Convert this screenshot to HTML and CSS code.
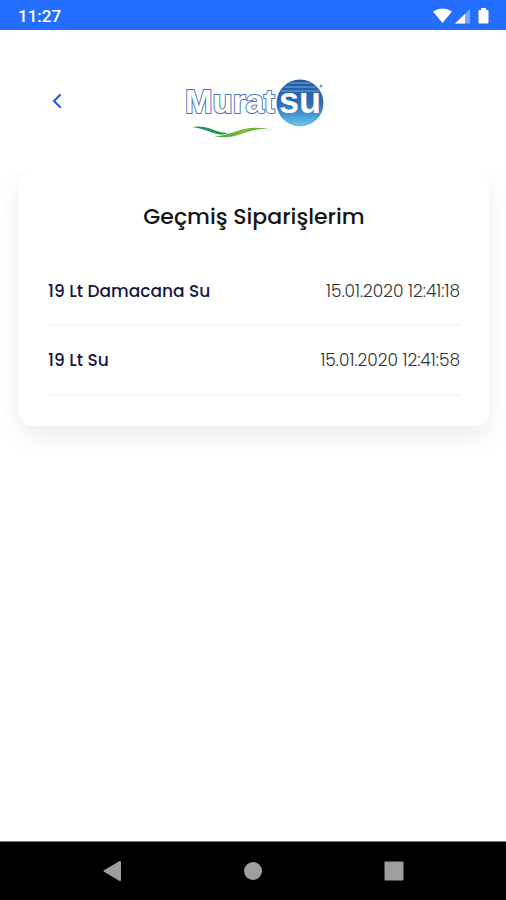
FILE: index.html
```html
<!DOCTYPE html>
<html lang="tr">
<head>
<meta charset="utf-8">
<meta name="viewport" content="width=device-width, initial-scale=1">
<title>Geçmiş Siparişlerim</title>
<link rel="stylesheet" href="styles.css">
</head>
<body>
<div class="status">
  <time>11:27</time>
  <svg class="status-icons" width="58" height="18" viewBox="0 0 58 18" aria-hidden="true">
    <path d="M1 4.500Q10.500-1.500 20 4.500L10.500 16Z" fill="#fff"/>
    <path d="M23 16.500 38 2V16.500Z" fill="#7ba8ff"/>
    <path d="M23 16.500 33 7V16.500Z" fill="#fff"/>
    <path d="M49 1h5v2h1.500q1 0 1 1v11.500q0 1-1 1h-8q-1 0-1-1V4q0-1 1-1H49Z" fill="#fff"/>
  </svg>
</div>
<header class="header">
  <button class="back" type="button" aria-label="Geri">
    <svg width="12" height="16" viewBox="0 0 12 16"><path d="M10 2 4 8l6 6" fill="none" stroke="#2660d8" stroke-width="2.200" stroke-linecap="round" stroke-linejoin="round"/></svg>
  </button>
  <svg class="logo" width="142" height="62" viewBox="0 0 142 62" role="img" aria-label="Muratsu">
    <defs>
      <linearGradient id="ball" x1="0" y1="0" x2="0" y2="1">
        <stop offset="0" stop-color="#2558a3"/><stop offset=".5" stop-color="#2c6db4"/><stop offset=".75" stop-color="#4198d3"/><stop offset="1" stop-color="#7cc4ec"/>
      </linearGradient>
      <linearGradient id="wave" x1="0" y1="0" x2="1" y2="0">
        <stop offset="0" stop-color="#35a34a"/><stop offset=".5" stop-color="#83bd3b"/><stop offset="1" stop-color="#479d40"/>
      </linearGradient>
    </defs>
    <text class="logo-murat" x="3" y="36">Murat</text>
    <circle cx="118" cy="26" r="23.500" fill="url(#ball)"/>
    <path d="M107 6h22M102 10h32M99 14h38" stroke="#6faedb" stroke-width="1"/>
    <text class="logo-su" x="97" y="36">su</text>
    <circle cx="139" cy="9" r="1" fill="none" stroke="#4b76b8"/>
    <path d="M10 50C26 47 33 56 46 56C36 61 26 52 10 50Z" fill="#229454"/>
    <path d="M32 59C50 60 60 45 91 53C66 48 56 65 32 59Z" fill="url(#wave)"/>
  </svg>
</header>
<main class="card">
  <h1>Geçmiş Siparişlerim</h1>
  <table class="orders">
    <tbody>
      <tr><th scope="row">19 Lt Damacana Su</th><td>15.01.2020 12:41:18</td></tr>
      <tr><th scope="row">19 Lt Su</th><td>15.01.2020 12:41:58</td></tr>
    </tbody>
  </table>
</main>
<nav class="nav" aria-label="Sistem">
  <button type="button" aria-label="Geri"><svg width="22" height="22" viewBox="0 0 22 22"><path d="M3 10.200 18.500 1Q20 .5 20 2V20q0 1.500-1.500 1L3 11.800Q1.500 11 3 10.200Z"/></svg></button>
  <button type="button" aria-label="Ana ekran"><svg width="22" height="22" viewBox="0 0 22 22"><circle cx="11" cy="11" r="9"/></svg></button>
  <button type="button" aria-label="Son uygulamalar"><svg width="22" height="22" viewBox="0 0 22 22"><rect x="1.500" y="1.500" width="19" height="19" rx="1"/></svg></button>
</nav>
</body>
</html>
```
FILE: styles.css
```css
* { box-sizing: border-box; }

body {
  display: flex;
  flex-direction: column;
  min-height: 100vh;
  margin: 0;
  background: #fff;
  font-family: Poppins, Inter, sans-serif;
}

button {
  display: grid;
  place-items: center;
  padding: 0;
  border: 0;
  background: none;
}

.status {
  display: flex;
  justify-content: space-between;
  align-items: center;
  height: 30px;
  padding: 2px 16px 0 18px;
  background: #246fff;
  color: #fff;
  font: 500 17px/28px Roboto, sans-serif;
}

.header {
  display: grid;
  grid-template-columns: 40px 1fr 40px;
  align-items: center;
  height: 142px;
  padding: 0 36px;
  background: #fff;
}

.back {
  width: 40px;
  height: 40px;
}

.logo { justify-self: center; margin-top: 14px; }

.logo text { font-family: "Liberation Sans", Arial, sans-serif; font-weight: 700; }

.logo-murat {
  fill: #fff;
  stroke: #4f76ba;
  stroke-width: 2px;
  paint-order: stroke;
  font-size: 33px;
}

.logo-su { fill: #fff; font-size: 36px; }

.card {
  margin: 0 17px 0 19px;
  padding: 27px 29px 30px;
  border-radius: 14px;
  background: #fff;
  box-shadow: 0 10px 24px rgba(40, 60, 90, 0.1);
  clip-path: inset(0 -40px -60px);
}

h1 {
  margin: 0 0 37px;
  color: #161616;
  font-size: 22px;
  font-weight: 500;
  line-height: 36px;
  text-align: center;
}

.orders {
  width: 100%;
  border-collapse: collapse;
  font-size: 17px;
  line-height: 24px;
}

.orders th,
.orders td {
  height: 70px;
  padding: 0;
  border-bottom: 2px solid #f6f6f7;
}

.orders tr:first-child th,
.orders tr:first-child td { height: 53px; padding-bottom: 15px; }

.orders th {
  color: #17173f;
  font-weight: 500;
  text-align: left;
}

.orders td {
  color: #333;
  font-weight: 300;
  text-align: right;
}

.nav {
  display: flex;
  justify-content: space-between;
  align-items: center;
  height: 59px;
  margin-top: auto;
  padding: 0 20%;
  border-top: 1px solid #777;
  background: #000;
}

.nav svg { fill: #9e9e9e; }
```
